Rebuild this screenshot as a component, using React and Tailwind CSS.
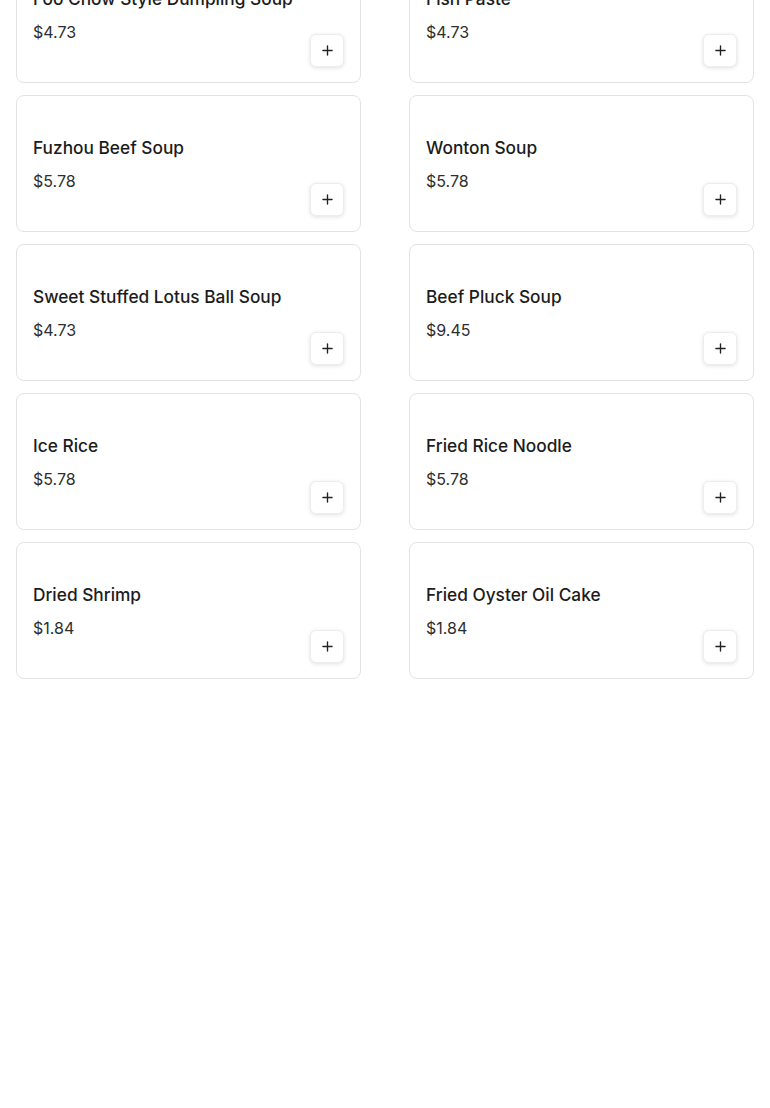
const items = [
  { name: 'Foo Chow Style Dumpling Soup', price: '$4.73' },
  { name: 'Fish Paste', price: '$4.73' },
  { name: 'Fuzhou Beef Soup', price: '$5.78' },
  { name: 'Wonton Soup', price: '$5.78' },
  { name: 'Sweet Stuffed Lotus Ball Soup', price: '$4.73' },
  { name: 'Beef Pluck Soup', price: '$9.45' },
  { name: 'Ice Rice', price: '$5.78' },
  { name: 'Fried Rice Noodle', price: '$5.78' },
  { name: 'Dried Shrimp', price: '$1.84' },
  { name: 'Fried Oyster Oil Cake', price: '$1.84' },
];

const PlusIcon = () => (
  <svg width="11" height="11" viewBox="0 0 12 12" fill="none">
    <path d="M6 1v10M1 6h10" stroke="#222" strokeWidth="1.5" strokeLinecap="round" />
  </svg>
);

const MenuCard = ({ item }) => (
  <div className="flex h-[137px] rounded-lg border border-[#e3e3e3] bg-white pl-4 pr-4 pb-[15px]">
    <div className="flex-1 pt-[40px]">
      <h3 className="text-[17.3px] leading-6 font-medium text-[#1c1c1c]">{item.name}</h3>
      <p className="mt-[9px] text-[16px] leading-6 text-[#2e2e2e]">{item.price}</p>
    </div>
    <div className="flex items-end">
      <button className="flex h-[33px] w-[34px] items-center justify-center rounded-md border border-[#ededed] bg-white shadow-[0_1px_4px_rgba(0,0,0,0.12)]">
        <PlusIcon />
      </button>
    </div>
  </div>
);

export default function App() {
  return (
    <div className="min-h-[1108px] bg-white" style={{ fontFamily: 'Inter, "Noto Sans", sans-serif' }}>
      <div className="-mt-[54px] grid grid-cols-2 gap-x-12 gap-y-3 px-4">
        {items.map((item) => (
          <MenuCard key={item.name} item={item} />
        ))}
      </div>
    </div>
  );
}
